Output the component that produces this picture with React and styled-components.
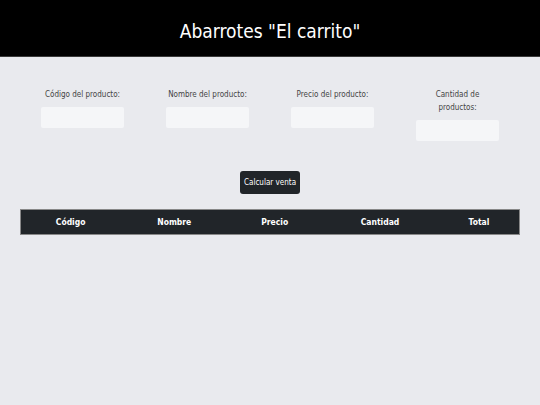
import React from "react";
import styled, { createGlobalStyle } from "styled-components";

const GlobalStyle = createGlobalStyle`
  html, body {
    margin: 0;
    padding: 0;
    background: #e9eaee;
    font-family: "DejaVu Sans Condensed", "DejaVu Sans", sans-serif;
  }
`;

const Header = styled.header`
  background: #000;
  color: #fff;
  height: 56px;
  border-bottom: 1px solid #3a3a3a;
  display: flex;
  align-items: center;
  justify-content: center;
`;

const Title = styled.h1`
  margin: 0;
  padding-top: 5px;
  font-size: 19px;
  font-weight: normal;
`;

const Main = styled.main`
  padding: 31px 20px 0;
`;

const FieldRow = styled.div`
  display: grid;
  grid-template-columns: repeat(4, 1fr);
  align-items: start;
`;

const Field = styled.div`
  display: flex;
  flex-direction: column;
  align-items: center;
`;

const Label = styled.label`
  font-size: 8px;
  color: #444;
  text-align: center;
  line-height: 13px;
  white-space: nowrap;
  margin-bottom: 6px;
`;

const Input = styled.input`
  width: 83px;
  height: 21px;
  box-sizing: border-box;
  border: none;
  border-radius: 2px;
  background: #f5f6f8;
`;

const ButtonRow = styled.div`
  display: flex;
  justify-content: center;
  margin-top: 30px;
`;

const Button = styled.button`
  font-family: inherit;
  font-size: 8px;
  color: #fff;
  background: #212529;
  border: none;
  border-radius: 3px;
  height: 23px;
  padding: 0 4px;
`;

const Table = styled.table`
  width: 100%;
  margin-top: 15px;
  border-collapse: collapse;
  background: #212529;
  border: 1px solid #888;
`;

const Th = styled.th`
  color: #fff;
  font-size: 8.5px;
  font-weight: bold;
  height: 24px;
  padding: 0 8px;
`;

const fields = [
  { id: "codigo", lines: ["Código del producto:"] },
  { id: "nombre", lines: ["Nombre del producto:"] },
  { id: "precio", lines: ["Precio del producto:"] },
  { id: "cantidad", lines: ["Cantidad de", "productos:"] },
];

const columns = ["Código", "Nombre", "Precio", "Cantidad", "Total"];

export default function App() {
  return (
    <>
      <GlobalStyle />
      <Header>
        <Title>Abarrotes "El carrito"</Title>
      </Header>
      <Main>
        <FieldRow>
          {fields.map((f) => (
            <Field key={f.id}>
              <Label htmlFor={f.id}>
                {f.lines.map((line, i) => (
                  <React.Fragment key={i}>
                    {i > 0 && <br />}
                    {line}
                  </React.Fragment>
                ))}
              </Label>
              <Input id={f.id} />
            </Field>
          ))}
        </FieldRow>
        <ButtonRow>
          <Button>Calcular venta</Button>
        </ButtonRow>
        <Table>
          <thead>
            <tr>
              {columns.map((c) => (
                <Th key={c}>{c}</Th>
              ))}
            </tr>
          </thead>
        </Table>
      </Main>
    </>
  );
}
